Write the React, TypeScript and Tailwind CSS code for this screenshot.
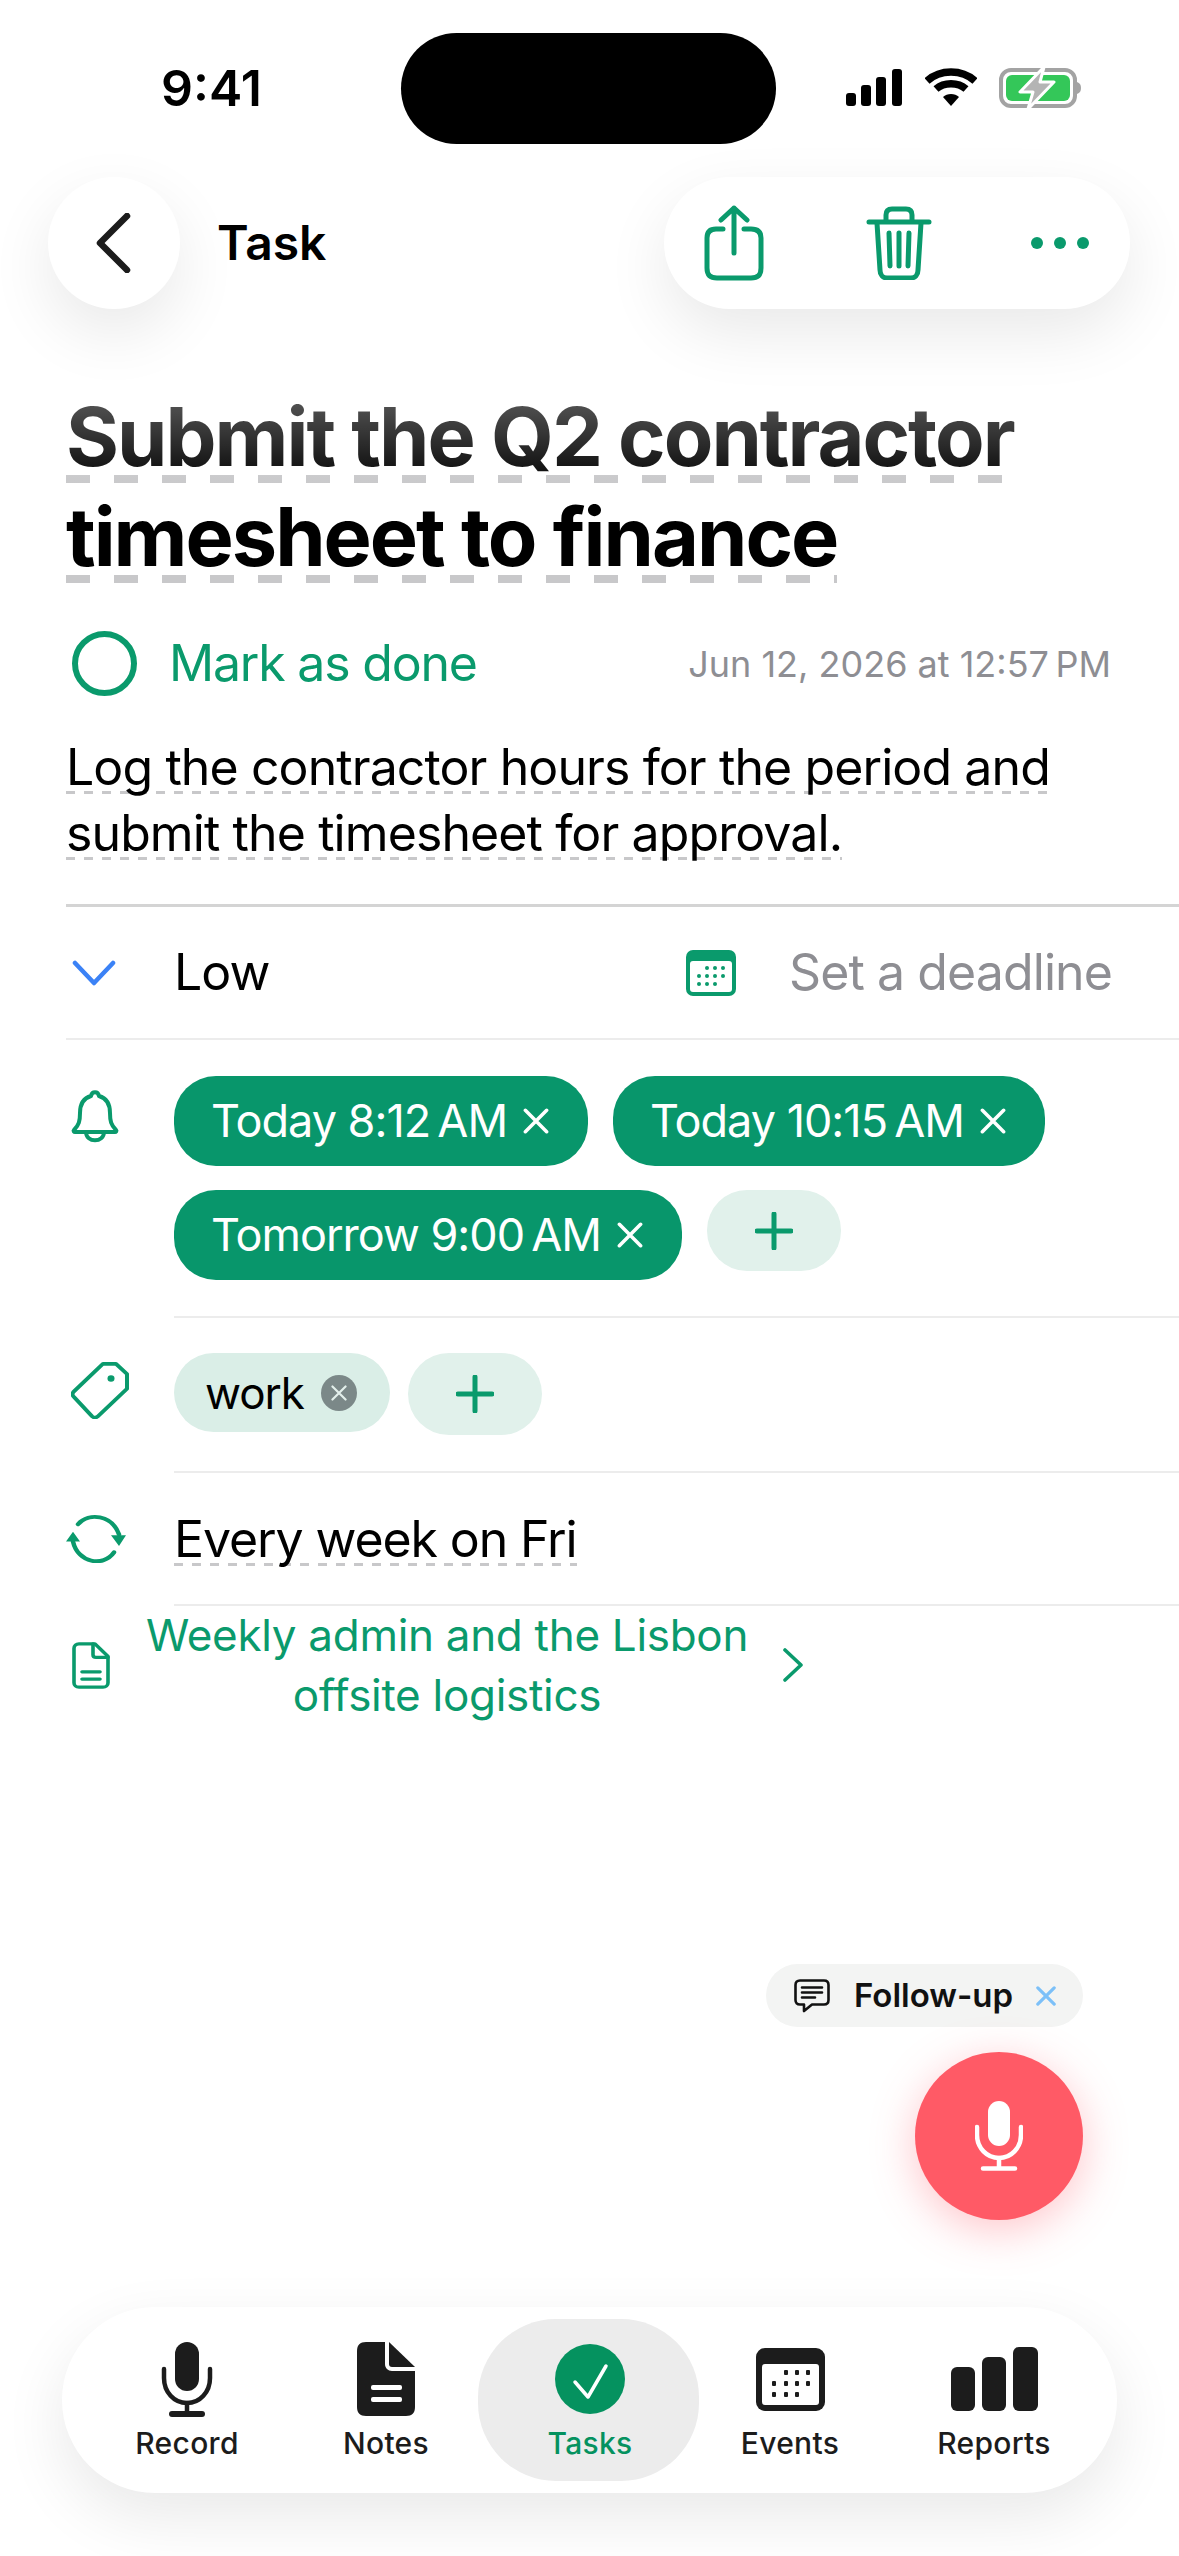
const font = { fontFamily: "Inter, sans-serif" };

const green = "#0a9a6c";

const Cross = ({ size = 22, color = "#fff", width = 3 }: { size?: number; color?: string; width?: number }) => (
  <svg width={size} height={size} viewBox="0 0 22 22" fill="none" stroke={color} strokeWidth={width} strokeLinecap="round">
    <path d="M2 2 20 20M20 2 2 20" />
  </svg>
);

const Plus = () => (
  <svg width="38" height="38" viewBox="0 0 38 38" fill="none" stroke="#0a9a6c" strokeWidth="5" strokeLinecap="round">
    <path d="M19 2v34M2 19h34" />
  </svg>
);

const StatusBar = () => (
  <div className="relative flex h-[177px] items-start">
    <span className="absolute left-[161px] top-[59px] text-[50px] font-semibold leading-[58px] text-black">9:41</span>
    <div className="absolute left-[401px] top-[33px] h-[111px] w-[375px] rounded-full bg-black" />
    <div className="absolute left-[845px] top-[67px] flex items-start">
      <svg width="60" height="40" viewBox="0 0 60 40" fill="#000">
        <rect x="1" y="26" width="10" height="13" rx="3" />
        <rect x="16" y="18" width="10" height="21" rx="3" />
        <rect x="31" y="10" width="10" height="29" rx="3" />
        <rect x="47" y="2" width="10" height="37" rx="3" />
      </svg>
      <svg className="ml-[20px]" width="52" height="40" viewBox="0 0 52 40" fill="none" stroke="#000" strokeWidth="7.5">
        <path d="M2 14C15 2 37 2 50 14" />
        <path d="M11 22C19 15 33 15 41 22" />
        <path d="M26 39 18 30C22 26 30 26 34 30Z" fill="#000" stroke="none" />
      </svg>
      <svg className="ml-[22px]" width="84" height="42" viewBox="0 0 84 42" fill="none">
        <rect x="2" y="3" width="74" height="36" rx="10" stroke="#a3a3a3" strokeWidth="4" />
        <rect x="7" y="8" width="64" height="26" rx="6" fill="#34c759" />
        <path d="M78 15c3 1 4 3 4 6s-1 5-4 6z" fill="#a3a3a3" />
        <path d="M45 0 21 25h13l-5 17 26-27H41z" fill="#b4b4b4" stroke="#fff" strokeWidth="3" strokeLinejoin="round" />
      </svg>
    </div>
  </div>
);

const Header = () => (
  <div className="relative z-10 flex h-[132px] items-center pl-[48px] pr-[49px]">
    <div className="flex h-[132px] w-[132px] items-center justify-center rounded-full bg-white shadow-[0_24px_64px_rgba(0,0,0,0.09)]">
      <svg width="38" height="60" viewBox="0 0 38 60" fill="none" stroke="#1c1c1c" strokeWidth="6.5" strokeLinecap="round" strokeLinejoin="round">
        <path d="M32 3 5 30l27 27" />
      </svg>
    </div>
    <span className="ml-[37px] text-[48px] font-semibold text-black">Task</span>
    <div className="ml-auto flex h-[132px] w-[466px] items-center rounded-full bg-white pl-[40px] shadow-[0_24px_64px_rgba(0,0,0,0.09)]">
      <svg width="60" height="76" viewBox="0 0 60 76" fill="none" stroke={green} strokeWidth="5" strokeLinecap="round" strokeLinejoin="round">
        <path d="M19 24H12C6 24 3 27 3 33v30c0 7 3 10 10 10h34c7 0 10-3 10-10V33c0-6-3-9-10-9h-7" />
        <path d="M30 48V3M17 15 30 3l13 12" />
      </svg>
      <svg className="ml-[102px]" width="66" height="74" viewBox="0 0 66 74" fill="none" stroke={green} strokeWidth="5" strokeLinecap="round" strokeLinejoin="round">
        <path d="M3 16h60M20 16V9c0-4 2-6 6-6h14c4 0 6 2 6 6v7" />
        <path d="M11 17l3 47c0 5 3 8 7 8h24c4 0 7-3 7-8l3-47" />
        <path d="M23 27l1 33M33 27v33M43 27l-1 33" />
      </svg>
      <div className="ml-[99px] flex gap-[11px]">
        <div className="h-[12px] w-[12px] rounded-full bg-[#0a9a6c]" />
        <div className="h-[12px] w-[12px] rounded-full bg-[#0a9a6c]" />
        <div className="h-[12px] w-[12px] rounded-full bg-[#0a9a6c]" />
      </div>
    </div>
  </div>
);

const Bell = () => (
  <svg width="50" height="54" viewBox="0 0 50 54" fill="none" stroke={green} strokeWidth="4" strokeLinejoin="round">
    <path d="M4 41c5-5 6-9 6-17 0-9 4-15 11-17 1-5 7-5 8 0 7 2 11 8 11 17 0 8 1 12 6 17 1 1 0 2-1 2H5c-1 0-2-1-1-2z" />
    <path d="M16 43c0 11 18 11 18 0" />
  </svg>
);

const Tag = () => (
  <svg width="58" height="57" viewBox="0 0 58 62" preserveAspectRatio="none" fill="none" stroke={green} strokeWidth="4" strokeLinejoin="round">
    <path d="M32 2h13l11 11v16L27 59c-2 2-4 2-6 0L3 38c-2-2-2-4 0-6z" />
    <circle cx="40" cy="18" r="3.5" fill={green} stroke="none" />
  </svg>
);

const Loop = () => (
  <svg width="62" height="50" viewBox="0 0 62 56" preserveAspectRatio="none" fill="none" stroke={green} strokeWidth="4.5" strokeLinecap="round">
    <path d="M13 12.5C24 -1 47 2 54 24" />
    <path d="M8 32c5 24 30 29 41 12" />
    <path d="M46 25h15l-7 12zM1 32h14L8 21z" fill={green} stroke="none" />
  </svg>
);

const DocLine = () => (
  <svg width="38" height="47" viewBox="0 0 38 52" preserveAspectRatio="none" fill="none" stroke={green} strokeWidth="3.6" strokeLinejoin="round" strokeLinecap="round">
    <path d="M23 2H7C4 2 2 4 2 7v38c0 3 2 5 5 5h24c3 0 5-2 5-5V16z" />
    <path d="M21 2v12c0 2 1 3 3 3h12M10 33h18M10 41h18" />
  </svg>
);

const AlarmChip = ({ label }: { label: string }) => (
  <div className="flex h-[90px] items-center gap-[16px] rounded-[42px] bg-[#08966b] pl-[37px] pr-[39px] text-[45px] tracking-[-1px] text-white">
    <span>{label}</span>
    <Cross size={26} width={3} />
  </div>
);

const Divider = () => <div className="h-[2px] bg-[#ececec]" />;

const Fields = () => (
  <div className="flex flex-col">
    <div className="ml-[66px] h-[3px] bg-[#d4d4d4]" />
    <div className="flex h-[131px] items-center pl-[72px] text-[50px] tracking-[-0.9px]">
      <svg width="44" height="26" viewBox="0 0 44 26" fill="none" stroke="#3b82f6" strokeWidth="4.5" strokeLinecap="round" strokeLinejoin="round">
        <path d="M3 3l19 20L41 3" />
      </svg>
      <span className="ml-[58px] text-black">Low</span>
      <svg className="ml-auto" width="50" height="46" viewBox="0 0 50 46">
        <rect width="50" height="46" rx="7" fill={green} />
        <rect x="4" y="11" width="42" height="31" rx="3" fill="#fff" />
        <g fill={green}>
          <circle cx="21" cy="18" r="2" /><circle cx="29" cy="18" r="2" /><circle cx="37" cy="18" r="2" />
          <circle cx="13" cy="26" r="2" /><circle cx="21" cy="26" r="2" /><circle cx="29" cy="26" r="2" /><circle cx="37" cy="26" r="2" />
          <circle cx="13" cy="34" r="2" /><circle cx="21" cy="34" r="2" /><circle cx="29" cy="34" r="2" />
        </g>
      </svg>
      <span className="ml-[53px] mr-[67px] text-[#8e8e93]">Set a deadline</span>
    </div>
    <div className="ml-[66px]"><Divider /></div>
    <div className="flex pl-[66px]">
      <div className="w-[108px] pl-[4px] pt-[49px]"><Bell /></div>
      <div className="flex-1">
        <div className="flex flex-wrap items-start gap-x-[25px] gap-y-[24px] pb-[36px] pt-[36px]">
          <AlarmChip label={"Today 8:12\u202FAM"} />
          <AlarmChip label={"Today 10:15\u202FAM"} />
          <AlarmChip label={"Tomorrow 9:00\u202FAM"} />
          <div className="flex h-[81px] w-[134px] items-center justify-center rounded-[40px] bg-[#e1f1eb]"><Plus /></div>
        </div>
        <Divider />
      </div>
    </div>
    <div className="flex pl-[66px]">
      <div className="w-[108px] pl-[5px] pt-[44px]"><Tag /></div>
      <div className="flex-1">
        <div className="flex items-start gap-[18px] pb-[36px] pt-[35px]">
          <div className="flex h-[79px] items-center gap-[17px] rounded-[40px] bg-[#daeee7] pl-[31px] pr-[33px] text-[44px] tracking-[-1px] text-black">
            <span>work</span>
            <div className="flex h-[36px] w-[36px] items-center justify-center rounded-full bg-[#7b8888]">
              <Cross size={16} color="#e3efeb" width={3} />
            </div>
          </div>
          <div className="flex h-[82px] w-[134px] items-center justify-center rounded-[41px] bg-[#e1f1eb]"><Plus /></div>
        </div>
        <Divider />
      </div>
    </div>
    <div className="flex pl-[65px]">
      <div className="w-[109px] pt-[40px]"><Loop /></div>
      <div className="flex-1">
        <div className="h-[131px] pt-[33px]">
          <span className="bg-[repeating-linear-gradient(90deg,#c8c8ca_0_9px,transparent_9px_18px)] bg-[length:100%_3px] bg-[position:0_calc(100%-3px)] bg-no-repeat text-[50px] leading-[66px] tracking-[-1.1px] text-black">
            Every week on Fri
          </span>
        </div>
        <Divider />
      </div>
    </div>
    <div className="-mt-[1px] flex items-center pl-[72px]">
      <DocLine />
      <p className="ml-[32px] w-[610px] text-center text-[44px] leading-[60px] tracking-[-0.3px] text-[#0a9a6c]">
        Weekly admin and the Lisbon offsite logistics
      </p>
      <svg className="ml-[31px]" width="20" height="34" viewBox="0 0 20 34" fill="none" stroke={green} strokeWidth="3.6" strokeLinecap="round" strokeLinejoin="round">
        <path d="M2 2l16 15L2 32" />
      </svg>
    </div>
  </div>
);

const FollowUp = () => (
  <div className="absolute left-[766px] top-[1964px] flex h-[63px] w-[317px] items-center rounded-full bg-[#f3f4f3] pl-[28px]">
    <svg width="36" height="34" viewBox="0 0 36 34" fill="none" stroke="#111" strokeWidth="2.6" strokeLinejoin="round" strokeLinecap="round">
      <path d="M6 1.500h24c3 0 4.500 1.500 4.500 4.500v15c0 3-1.500 4.500-4.500 4.500H18L10 32v-6.500H6c-3 0-4.500-1.500-4.500-4.500V6c0-3 1.500-4.500 4.500-4.500z" />
      <path d="M8 8.500h20M8 13.500h20M8 18.500h13" />
    </svg>
    <span className="ml-[24px] text-[33px] font-semibold text-[#111]">Follow-up</span>
    <div className="ml-[23px]"><Cross size={20} color="#7cc0f8" width={3.5} /></div>
  </div>
);

const MicButton = () => (
  <div className="absolute left-[915px] top-[2052px] flex h-[168px] w-[168px] items-center justify-center rounded-full bg-[#ff5a66] shadow-[0_10px_44px_rgba(255,90,102,0.35)]">
    <svg width="48" height="70" viewBox="0 0 48 70" fill="none" stroke="#fff" strokeWidth="4.5" strokeLinecap="round">
      <rect x="13" y="0" width="22" height="45" rx="11" fill="#fff" stroke="none" />
      <path d="M2 26v8c0 13 10 23 22 23s22-10 22-23v-8" />
      <path d="M24 57v10M8 67.500h32" />
    </svg>
  </div>
);

const TabItem = ({ label, active, children }: { label: string; active?: boolean; children: React.ReactNode }) => (
  <div className="relative flex flex-col items-center">
    {active && <div className="absolute -left-[7px] top-[12px] h-[162px] w-[221px] rounded-[78px] bg-[#ececec]" />}
    <div className="relative mt-[34px] flex h-[76px] items-center justify-center">{children}</div>
    <span className={`relative mt-[4px] text-[30px] font-medium tracking-[0.3px] ${active ? "text-[#05925f]" : "text-[#1c1c1c]"}`}>{label}</span>
  </div>
);

const TabBar = () => (
  <div className="absolute left-[62px] top-[2307px] grid h-[186px] w-[1055px] grid-cols-[200px_198px_210px_190px_218px] rounded-[93px] bg-white px-[25px] shadow-[0_24px_64px_rgba(0,0,0,0.09)]">
    <TabItem label="Record">
      <svg width="52" height="76" viewBox="0 0 52 76" fill="none" stroke="#1c1c1c" strokeLinecap="round">
        <rect x="14" y="1" width="24" height="49" rx="12" fill="#1c1c1c" stroke="none" />
        <path d="M3 28v9c0 14 10 25 23 25s23-11 23-25v-9" strokeWidth="4.5" />
        <path d="M26 62v10" strokeWidth="4.5" />
        <rect x="8" y="70" width="36" height="6" rx="3" fill="#1c1c1c" stroke="none" />
      </svg>
    </TabItem>
    <TabItem label="Notes">
      <svg width="58" height="74" viewBox="0 0 58 74" fill="#1c1c1c">
        <path d="M9 0h19v22c0 4 3 7 7 7h23v36c0 6-3 9-9 9H9c-6 0-9-3-9-9V9c0-6 3-9 9-9z" />
        <path d="M32 0 58 25H35c-2 0-3-1-3-3z" />
        <rect x="14" y="43" width="31" height="5" rx="2" fill="#fff" />
        <rect x="14" y="55" width="31" height="5" rx="2" fill="#fff" />
      </svg>
    </TabItem>
    <TabItem label="Tasks" active>
      <svg width="70" height="70" viewBox="0 0 70 70" fill="none">
        <circle cx="35" cy="35" r="35" fill="#05925f" />
        <path d="M20 38l13 15 18-31" stroke="#fff" strokeWidth="3.5" strokeLinecap="round" strokeLinejoin="round" />
      </svg>
    </TabItem>
    <TabItem label="Events">
      <svg width="69" height="63" viewBox="0 0 69 63">
        <rect width="69" height="63" rx="9" fill="#1c1c1c" />
        <rect x="6" y="16" width="57" height="41" rx="3" fill="#fff" />
        <g fill="#1c1c1c">
          <rect x="28" y="22" width="4" height="5" rx="1" /><rect x="39" y="22" width="4" height="5" rx="1" /><rect x="50" y="22" width="4" height="5" rx="1" />
          <rect x="16" y="33" width="4" height="5" rx="1" /><rect x="28" y="33" width="4" height="5" rx="1" /><rect x="39" y="33" width="4" height="5" rx="1" /><rect x="50" y="33" width="4" height="5" rx="1" />
          <rect x="16" y="44" width="4" height="5" rx="1" /><rect x="28" y="44" width="4" height="5" rx="1" /><rect x="39" y="44" width="4" height="5" rx="1" />
        </g>
      </svg>
    </TabItem>
    <TabItem label="Reports">
      <svg width="87" height="64" viewBox="0 0 87 64" fill="#1c1c1c">
        <rect x="0" y="20" width="24" height="44" rx="6" />
        <rect x="31" y="10" width="24" height="54" rx="6" />
        <rect x="62" y="0" width="25" height="64" rx="6" />
      </svg>
    </TabItem>
  </div>
);

export default function App() {
  return (
    <div className="relative h-[2556px] w-[1179px] overflow-hidden bg-white" style={font}>
      <main className="absolute left-0 top-[309px] w-full">
        <div className="px-[66px] pt-[78px]">
          <h1 className="text-[81px] font-bold leading-[100px] tracking-[-2px] text-black">
            <span className="bg-[repeating-linear-gradient(90deg,#c8c8ca_0_24px,transparent_24px_48px)] bg-[length:100%_8px] bg-[position:0_calc(100%-3px)] bg-no-repeat [box-decoration-break:clone]">
              Submit the Q2 contractor timesheet to finance
            </span>
          </h1>
          <div className="mt-[39px] flex items-center pl-[6px] pr-[2px]">
            <div className="h-[65px] w-[65px] rounded-full border-[6px] border-[#0a9a6c]" />
            <span className="ml-[32px] text-[50px] tracking-[-1.2px] text-[#0a9a6c]">Mark as done</span>
            <span className="ml-auto text-[36px] text-[#8e8e93]">{"Jun 12, 2026 at 12:57\u202FPM"}</span>
          </div>
          <p className="mt-[33px] text-[50px] leading-[66px] tracking-[-0.9px] text-black">
            <span className="bg-[repeating-linear-gradient(90deg,#c8c8ca_0_9px,transparent_9px_18px)] bg-[length:100%_3px] bg-[position:0_calc(100%-3px)] bg-no-repeat [box-decoration-break:clone]">
              Log the contractor hours for the period and submit the timesheet for approval.
            </span>
          </p>
        </div>
        <div className="mt-[38px]"><Fields /></div>
      </main>
      <div className="absolute inset-x-0 top-0 h-[490px] bg-gradient-to-b from-white via-white/90 to-transparent" />
      <StatusBar />
      <Header />
      <FollowUp />
      <MicButton />
      <TabBar />
    </div>
  );
}
